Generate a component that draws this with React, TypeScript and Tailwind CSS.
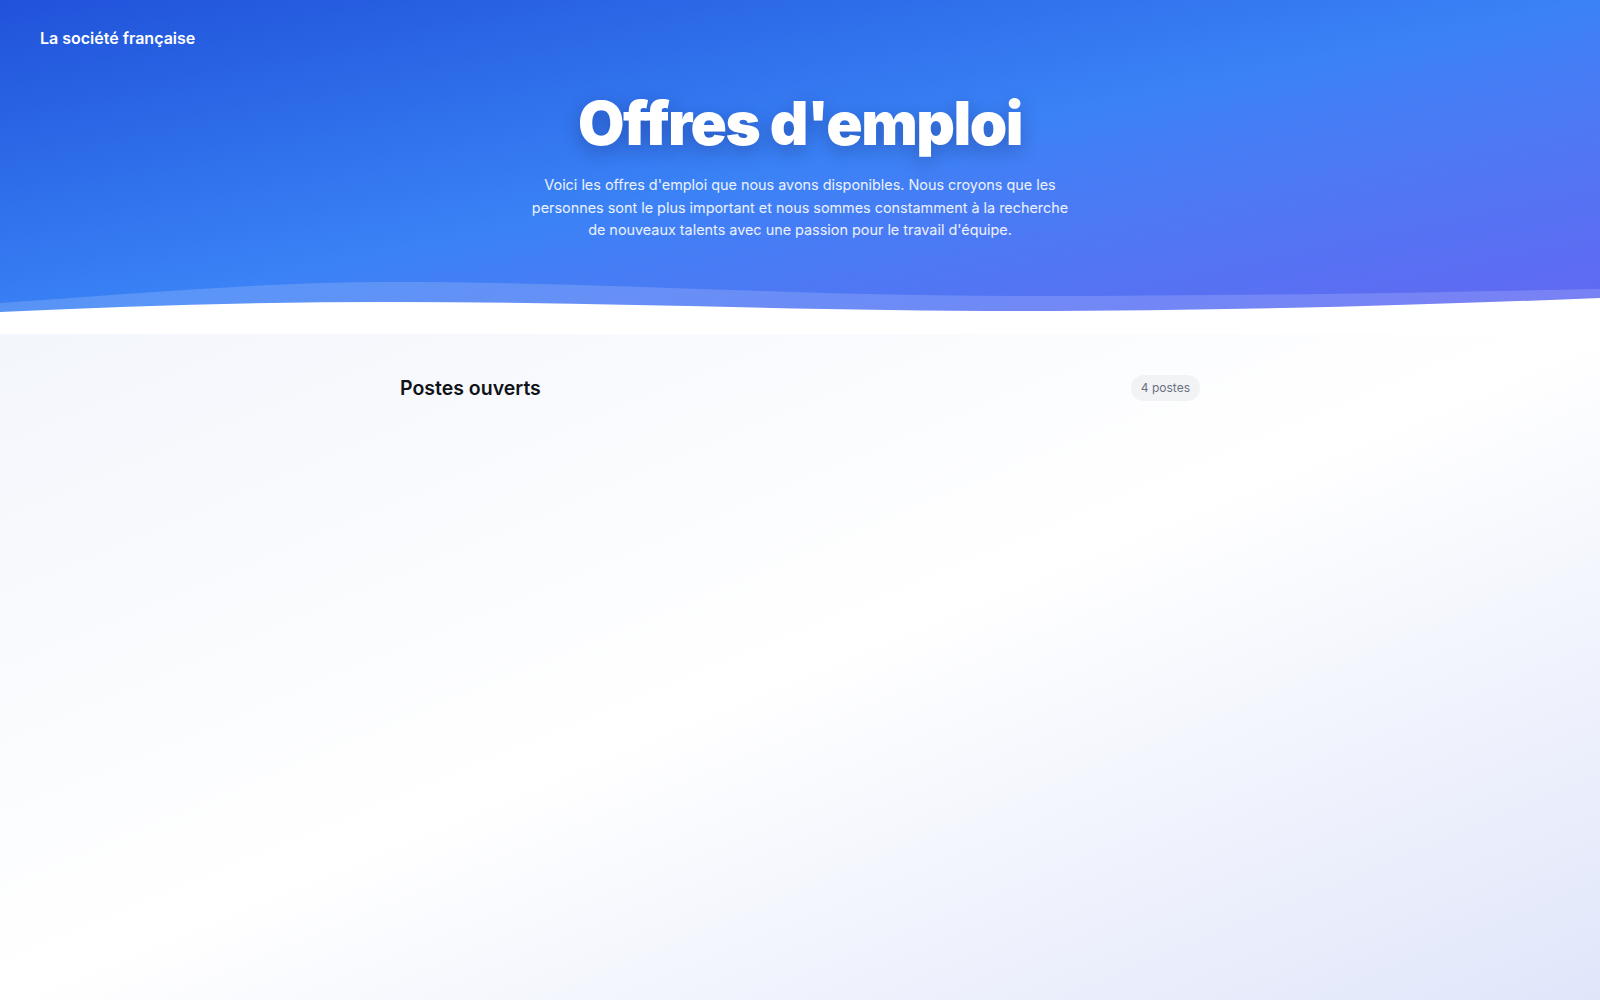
import React from "react";

const jobs = [
  { title: "Développeur Front-end", team: "Ingénierie" },
  { title: "Designer Produit", team: "Design" },
  { title: "Responsable Marketing", team: "Marketing" },
  { title: "Chargé de clientèle", team: "Support" },
];

function Wave() {
  return (
    <svg
      className="absolute bottom-0 left-0 w-full h-[60px]"
      viewBox="0 0 1600 60"
      preserveAspectRatio="none"
      aria-hidden="true"
    >
      <path
        d="M0 29 C 130 20, 260 8, 390 8 C 600 8, 800 22, 1020 22 C 1250 22, 1450 18, 1600 15 L1600 60 L0 60 Z"
        fill="#ffffff"
        fillOpacity="0.16"
      />
      <path
        d="M0 38 C 130 32, 260 28, 390 28 C 600 28, 800 37, 1020 37 C 1250 37, 1450 30, 1600 24 L1600 60 L0 60 Z"
        fill="#ffffff"
      />
    </svg>
  );
}

export default function App() {
  return (
    <div
      className="min-h-screen flex flex-col"
      style={{ fontFamily: "Inter, 'Noto Sans', sans-serif" }}
    >
      {/* Hero */}
      <header className="relative h-[334px] bg-gradient-to-br from-[#2152da] via-[#3b82f6] to-[#6366f1] overflow-hidden">
        <nav className="px-10 pt-[26px]">
          <span className="text-base leading-6 font-semibold text-white">La société française</span>
        </nav>

        <div className="mt-[43px] flex flex-col items-center text-center">
          <h1 className="text-6xl leading-none font-black tracking-tight text-white [text-shadow:0_6px_18px_rgba(15,23,80,0.3)]">
            Offres d'emploi
          </h1>
          <p className="mt-[21px] max-w-[552px] text-[14.4px] leading-[22.5px] text-white/90">
            Voici les offres d'emploi que nous avons disponibles. Nous croyons que les personnes sont le plus
            important et nous sommes constamment à la recherche de nouveaux talents avec une passion pour le
            travail d'équipe.
          </p>
        </div>

        <Wave />
      </header>

      {/* Job list */}
      <main className="flex-1 bg-gradient-to-br from-[#f3f6fc] via-white to-[#e0e6fa]">
        <div className="max-w-[800px] mx-auto pt-10">
          <div className="flex items-center justify-between">
            <h2 className="text-[19.5px] leading-7 font-semibold text-[#111318]">Postes ouverts</h2>
            <span className="rounded-full bg-[#f2f3f5] px-2.5 py-[5px] text-xs leading-4 text-gray-500">
              {jobs.length} postes
            </span>
          </div>
        </div>
      </main>
    </div>
  );
}
